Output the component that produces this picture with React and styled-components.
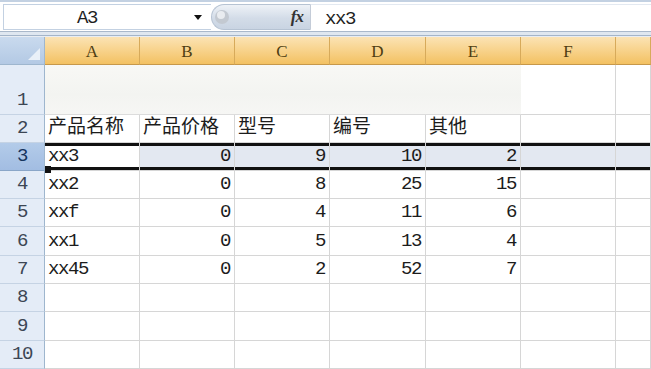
import styled, { createGlobalStyle, css } from 'styled-components';

const GlobalStyle = createGlobalStyle`
    html, body {
        margin: 0;
        padding: 0;
        background: #ffffff;
        overflow: hidden;
    }
    * {
        box-sizing: border-box;
    }
`

const CELL_FONT = `"Liberation Mono", "Noto Sans CJK SC", monospace`

const Window = styled.div`
    width: 651px;
    height: 369px;
    overflow: hidden;
    display: flex;
    flex-direction: column;
    background: #ffffff;
    font-family: ${CELL_FONT};
`

const FormulaBar = styled.div`
    height: 32px;
    display: flex;
    align-items: stretch;
    padding: 2px 0 1px 3px;
    background: #ffffff;
    border-top: 2px solid #c3d1e2;
    border-bottom: 1px solid #a9b8ca;
`

const NameBox = styled.div`
    width: 208px;
    display: flex;
    align-items: center;
    border: 1px solid #c3d1e2;
    border-right: none;
    font-size: 19px;
    letter-spacing: -1.4px;
    color: #1e1e1e;
`

const NameText = styled.span`
    flex: 1;
    text-align: center;
    padding-right: 24px;
    padding-top: 2px;
`

const DropArrow = styled.span`
    width: 0;
    height: 0;
    margin-right: 9px;
    border-left: 4px solid transparent;
    border-right: 4px solid transparent;
    border-top: 5px solid #111;
`

const FxPill = styled.div`
    width: 100px;
    display: flex;
    align-items: center;
    justify-content: space-between;
    padding: 0 7px 0 0;
    border-radius: 14px 0 0 14px;
    background: linear-gradient(#eef2f7, #d3dce8 55%, #c9d4e2);
    border: 1px solid #b6c3d3;
    border-right: 1px solid #c4ccd8;
`

const Fx = styled.span`
    font-family: "Liberation Serif", serif;
    font-style: italic;
    font-weight: bold;
    font-size: 17px;
    color: #333;
    letter-spacing: -1px;
`

const FormulaInput = styled.div`
    flex: 1;
    display: flex;
    align-items: center;
    padding: 2px 0 0 14px;
    font-size: 19px;
    letter-spacing: -1.4px;
    color: #1e1e1e;
    border-top: 1px solid #e3e9f1;
`

const Band = styled.div`
    height: 6px;
    background: linear-gradient(#dfe7f0 0, #dfe7f0 3px, #a4b5c9 3px, #a4b5c9 4px, #e8edf3 4px);
`

const Sheet = styled.div`
    flex: 1;
    display: grid;
    grid-template-columns: 45px 95px 95px 95px 96px 95px 95px 1fr;
    grid-template-rows: 28px 50px 28px 28px 28px 28px 29px 28px 28px 29px 28px;
`

const Corner = styled.div`
    position: relative;
    background: linear-gradient(#c9daee, #b3c9e4);
    border-right: 1px solid #9eb6ce;
    border-bottom: 1px solid #9eb6ce;
    &::after {
        content: "";
        position: absolute;
        right: 4px;
        bottom: 4px;
        border-left: 12px solid transparent;
        border-bottom: 12px solid #e9f0f8;
    }
`

const ColHead = styled.div`
    display: flex;
    align-items: center;
    justify-content: center;
    font-family: "Liberation Serif", serif;
    font-size: 17px;
    color: #4e3d12;
    background: linear-gradient(#fbe3b4, #f8d48f 45%, #f3c162);
    border-right: 1px solid #d7aa5a;
    border-bottom: 1px solid #c7984a;
    padding-top: 2px;
`

const RowHead = styled.div`
    display: flex;
    align-items: flex-end;
    justify-content: center;
    padding-bottom: 3px;
    font-size: 19px;
    letter-spacing: -1.4px;
    color: ${({ $active }) => ($active ? '#15335c' : '#3c4654')};
    background: ${({ $active }) => ($active ? 'linear-gradient(#b3cbe9, #a2bde2)' : '#e4ecf7')};
    border-right: 1px solid #9eb6ce;
    border-bottom: 1px solid ${({ $active }) => ($active ? '#8aa6c8' : '#c5d3e4')};
`

const selected = css`
    box-shadow: inset 0 3px 0 #111, inset 0 -3px 0 #111;
`

const Cell = styled.div`
    position: relative;
    display: flex;
    align-items: flex-end;
    justify-content: ${({ $num }) => ($num ? 'flex-end' : 'flex-start')};
    padding: 0 4px 4px 3px;
    font-size: ${({ $cjk }) => ($cjk ? '19px' : '19px')};
    letter-spacing: ${({ $cjk }) => ($cjk ? '0' : '-1.4px')};
    line-height: 1;
    color: #1c1c1c;
    white-space: nowrap;
    background: ${({ $hl }) => ($hl ? '#e3e8f1' : '#ffffff')};
    border-right: 1px solid #d6d6d6;
    border-bottom: 1px solid #d6d6d6;
    ${({ $sel }) => $sel && selected}
`

const MergedTitle = styled.div`
    grid-column: span 5;
    background: linear-gradient(#f8f8f5, #f3f4f1 60%, #f6f6f4);
    border-bottom: 1px solid #dcdcdc;
`

const FillHandle = styled.span`
    position: absolute;
    left: 0;
    bottom: -3px;
    width: 6px;
    height: 7px;
    background: #111;
    z-index: 2;
`

const Knob = () => (
    <svg width="20" height="26" viewBox="0 0 20 26">
        <circle cx="10" cy="13" r="7" fill="#c3c9d1" />
        <circle cx="9" cy="11" r="4" fill="#e9ecf0" />
    </svg>
)

const columns = ['A', 'B', 'C', 'D', 'E', 'F', '']

const header = ['产品名称', '产品价格', '型号', '编号', '其他']

const rows = [
    ['xx3', 0, 9, 10, 2],
    ['xx2', 0, 8, 25, 15],
    ['xxf', 0, 4, 11, 6],
    ['xx1', 0, 5, 13, 4],
    ['xx45', 0, 2, 52, 7],
]

const App = () => {
    return (
        <Window>
            <GlobalStyle />
            <FormulaBar>
                <NameBox>
                    <NameText>A3</NameText>
                    <DropArrow />
                </NameBox>
                <FxPill>
                    <Knob />
                    <Fx>fx</Fx>
                </FxPill>
                <FormulaInput>xx3</FormulaInput>
            </FormulaBar>
            <Band />
            <Sheet>
                <Corner />
                {columns.map((c, i) => (
                    <ColHead key={i}>{c}</ColHead>
                ))}

                <RowHead>1</RowHead>
                <MergedTitle />
                <Cell />
                <Cell />

                <RowHead>2</RowHead>
                {header.map((h, i) => (
                    <Cell key={i} $cjk>{h}</Cell>
                ))}
                <Cell />
                <Cell />

                {rows.map((r, ri) => {
                    const active = ri === 0
                    return [
                        <RowHead key={`h${ri}`} $active={active}>{ri + 3}</RowHead>,
                        ...r.map((v, ci) => (
                            <Cell
                                key={`${ri}-${ci}`}
                                $num={typeof v === 'number'}
                                $sel={active}
                                $hl={active && ci > 0}
                            >
                                {v}
                                {active && ci === 0 && <FillHandle />}
                            </Cell>
                        )),
                        <Cell key={`f${ri}`} $sel={active} $hl={active} />,
                        <Cell key={`g${ri}`} $sel={active} $hl={active} />,
                    ]
                })}

                {[8, 9, 10].map((n) => [
                    <RowHead key={`h${n}`}>{n}</RowHead>,
                    ...columns.map((_, ci) => <Cell key={`${n}-${ci}`} />),
                ])}
            </Sheet>
        </Window>
    )
}

export default App
